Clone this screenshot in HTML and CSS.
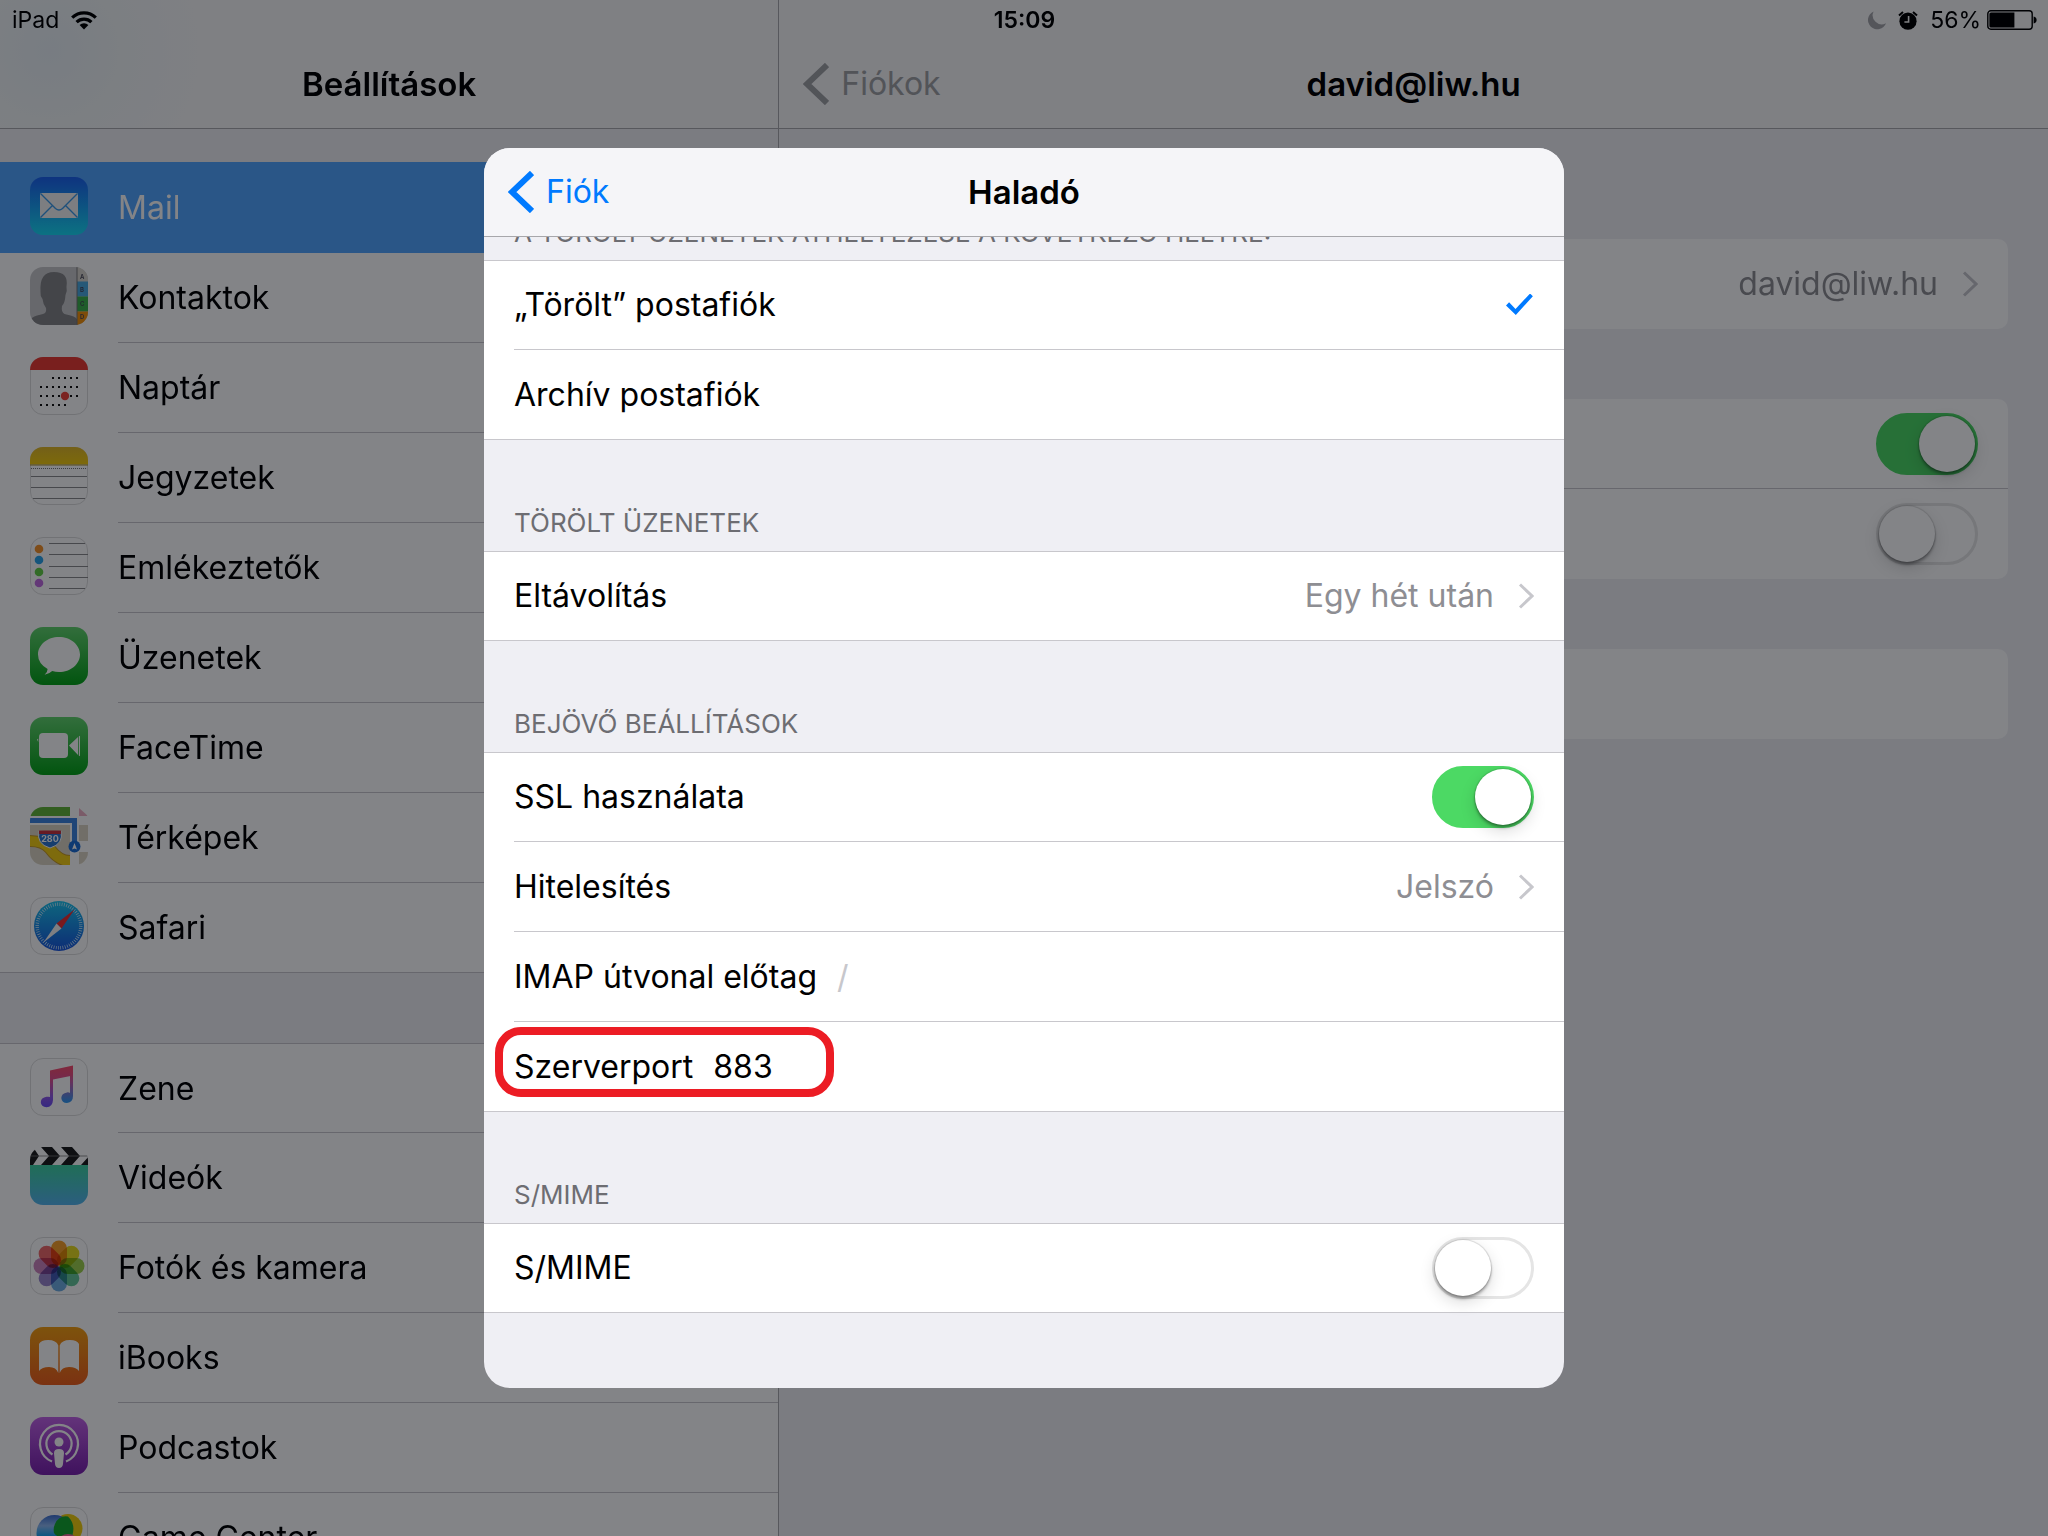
FILE: index.html
```html
<!DOCTYPE html>
<html lang="hu">
<head>
<meta charset="utf-8">
<meta name="viewport" content="width=device-width, initial-scale=1">
<title>Beállítások</title>
<link rel="stylesheet" href="styles.css">
</head>
<body>
<div class="screen">
  <header class="status">
    <div class="status-side">
      <span>iPad</span>
      <svg class="wifi" viewBox="0 0 26 19" aria-hidden="true"><g fill="none" stroke="#000" stroke-width="3.2"><path d="M1.2 6.6a17 17 0 0 1 23.6 0"/><path d="M5.6 11.2a10.6 10.6 0 0 1 14.8 0"/></g><path d="M13 18.6l-4.4-4.5a6.4 6.4 0 0 1 8.8 0z"/></svg>
    </div>
    <strong class="clock">15:09</strong>
    <div class="status-side status-right">
      <svg class="moon" viewBox="0 0 18 19" aria-hidden="true"><path fill="#a3a4a8" d="M5.6.4A9.3 9.3 0 1 0 18 12.2 9 9 0 0 1 5.6.4z"/></svg>
      <svg class="alarm" viewBox="0 0 20 19" aria-hidden="true"><circle cx="10" cy="10.2" r="8.6"/><path d="M1 4.6L5 1M19 4.6L15 1" stroke="#000" stroke-width="2"/><path d="M10.6 5v6H6.4" fill="none" stroke="#f7f7f8" stroke-width="1.6"/></svg>
      <span>56%</span>
      <svg class="battery" viewBox="0 0 50 20" aria-hidden="true"><rect x=".8" y=".8" width="44.4" height="18.4" rx="3" fill="none" stroke="#000" stroke-width="1.4"/><path d="M4 2.4h23.4v15.2H4a1.6 1.6 0 0 1-1.6-1.6V4A1.6 1.6 0 0 1 4 2.4z"/><path d="M46.600 6.600q3 .6 3 3.400t-3 3.400z"/></svg>
    </div>
  </header>

  <nav class="sidebar">
    <div class="bar bar-tint"><h1 class="bar-title">Beállítások</h1></div>
    <ul class="menu">
      <li class="active"><a href="#mail">
        <svg class="app" viewBox="0 0 58 58"><defs><linearGradient id="gm" x2="0" y2="1"><stop offset="0" stop-color="#1d62f0"/><stop offset="1" stop-color="#19dcf6"/></linearGradient></defs><rect width="58" height="58" rx="13" fill="url(#gm)"/><rect x="10" y="16" width="38" height="25" rx="1" fill="#f4f4f4"/><path d="M10.5 16.500L25.500 31.500q3.500 3.200 7 0L47.500 16.500M10.500 40.500L22.500 28.500M47.500 40.500L35.500 28.500" fill="none" stroke="#3b9be8" stroke-width="1.400"/></svg>
        <span>Mail</span></a></li>
      <li><a href="#kontaktok">
        <svg class="app" viewBox="0 0 58 58"><defs><clipPath id="r"><rect width="58" height="58" rx="13"/></clipPath></defs><g clip-path="url(#r)"><rect width="58" height="58" fill="#c9c9cb"/><path d="M0 58v-4q1-4 7-5.500l6-1.500q4-1 3-6-3-4-3.500-9-2.500-3-2-7Q9 5 24 5t12.500 15q1 4-1 8-.5 8-3.500 11-1 6 2.500 8l6 1.500q7 1.500 7 5.500v4z" fill="#858587"/><rect x="47" width="11" height="15" fill="#d8d5cc"/><rect x="47" y="14.500" width="11" height="15" fill="#4aa9e0"/><rect x="47" y="29.500" width="11" height="15" fill="#3db14b"/><rect x="47" y="44.500" width="11" height="14" fill="#f6930b"/><path d="M47 0v58" stroke="#777"/></g><g font-family="Inter, sans-serif" font-size="6" font-weight="600" fill="#445"><text x="50" y="12">A</text><text x="50" y="25">B</text><text x="50" y="39">C</text><text x="50" y="52">D</text></g></svg>
        <span>Kontaktok</span></a></li>
      <li><a href="#naptar">
        <svg class="app" viewBox="0 0 58 58"><rect x=".5" y=".5" width="57" height="57" rx="12.500" fill="#fff" stroke="#ddd"/><path d="M0 13a13 13 0 0 1 13-13h32a13 13 0 0 1 13 13z" fill="#ec3b33"/><g stroke="#111" stroke-width="2" stroke-dasharray="2 4"><path d="M22 21h27M10 30h39M10 39h39M10 48h27"/></g><circle cx="35" cy="39" r="4.200" fill="#f0433a"/></svg>
        <span>Naptár</span></a></li>
      <li><a href="#jegyzetek">
        <svg class="app" viewBox="0 0 58 58"><defs><linearGradient id="gn" x2="0" y2="1"><stop offset="0" stop-color="#e0b92a"/><stop offset="1" stop-color="#f4cb0c"/></linearGradient></defs><rect x=".5" y=".5" width="57" height="57" rx="12.500" fill="#fff" stroke="#ddd"/><path d="M0 17.500V13A13 13 0 0 1 13 0h32a13 13 0 0 1 13 13v4.500z" fill="url(#gn)"/><path d="M0 18h58" stroke="#a58f30"/><path d="M1 21.500h56" stroke="#777" stroke-dasharray="1 1"/><path d="M1 29.500h56M1 40.500h56M3 51.500h52" stroke="#8a8a8c"/></svg>
        <span>Jegyzetek</span></a></li>
      <li><a href="#emlekeztetok">
        <svg class="app" viewBox="0 0 58 58"><rect x=".5" y=".5" width="57" height="57" rx="12.500" fill="#fff" stroke="#ddd"/><circle cx="9" cy="12" r="4.300" fill="#f5932a"/><circle cx="9" cy="23" r="4.300" fill="#2aa3ea"/><circle cx="9" cy="35" r="4.300" fill="#63cf47"/><circle cx="9" cy="46" r="4.300" fill="#c06be0"/><path d="M19 6.500h36M19 17.500h39M19 29.500h39M19 40.500h39M19 51.500h36" stroke="#8a8a8c"/></svg>
        <span>Emlékeztetők</span></a></li>
      <li><a href="#uzenetek">
        <svg class="app" viewBox="0 0 58 58"><defs><linearGradient id="gg" x2="0" y2="1"><stop offset="0" stop-color="#63d46d"/><stop offset="1" stop-color="#05a317"/></linearGradient></defs><rect width="58" height="58" rx="13" fill="url(#gg)"/><path d="M29 10c11.600 0 21 7.800 21 17.500S40.600 45 29 45q-3.500 0-6.800-.9-3 3-7.600 3.700 3-2.600 3-5.800Q8 36.500 8 27.500C8 17.800 17.400 10 29 10z" fill="#fff"/></svg>
        <span>Üzenetek</span></a></li>
      <li><a href="#facetime">
        <svg class="app" viewBox="0 0 58 58"><rect width="58" height="58" rx="13" fill="url(#gg)"/><rect x="9" y="16" width="29" height="25" rx="4" fill="#fff"/><path d="M39 28.500l9-8.500v18zM48.800 19.500l1.200-.8v20.600l-1.200-.8zM7 22.500l1.200-1v3.600z" fill="#fff"/></svg>
        <span>FaceTime</span></a></li>
      <li><a href="#terkepek">
        <svg class="app" viewBox="0 0 58 58"><g clip-path="url(#r)"><rect width="58" height="58" fill="#fff"/><path d="M0 0h40v9H0z" fill="#63b53a"/><path d="M49 1l9 8h-9z" fill="#eeb0c2"/><path d="M0 18h40v40H0z" fill="#dcd5c3"/><path d="M49 18h9v16h-9zM49 45h9v13h-9z" fill="#dcd5c3"/><path d="M0 34q14 0 20 8 9 12 20 12" fill="none" stroke="#c79a28" stroke-width="12"/><path d="M0 34q14 0 20 8 9 12 20 12" fill="none" stroke="#f5cf12" stroke-width="10"/><path d="M40 18h9v40h-9z" fill="#fff"/><path d="M50 58l8-6v6z" fill="#f5cf12"/><path d="M0 13.500h44.500V38" fill="none" stroke="#3d85e0" stroke-width="5"/><circle cx="44.500" cy="39.500" r="6" fill="#1e6fd6"/><path d="M44.500 36l2.500 6.500-2.500-1-2.500 1z" fill="#fff"/><path d="M9 24q11 2 22 0 3 13-11 17Q6 37 9 24z" fill="#2b76cf" stroke="#fff" stroke-width="1"/><path d="M9 23.500h22v3.500H9z" fill="#c8343d"/></g><text x="20" y="35" text-anchor="middle" font-family="Inter, sans-serif" font-size="9" font-weight="700" fill="#fff">280</text></svg>
        <span>Térképek</span></a></li>
      <li><a href="#safari">
        <svg class="app" viewBox="0 0 58 58"><defs><linearGradient id="gs" x2="0" y2="1"><stop offset="0" stop-color="#1cc5ee"/><stop offset="1" stop-color="#1a56dd"/></linearGradient></defs><rect x=".5" y=".5" width="57" height="57" rx="12.500" fill="#fff" stroke="#ddd"/><circle cx="29" cy="29" r="25" fill="url(#gs)"/><circle cx="29" cy="29" r="21.800" fill="none" stroke="#d9f2ff" stroke-width="3.400" stroke-dasharray=".7 1.580"/><path d="M44.500 12.500L31.500 31.500 26.500 26.500z" fill="#ee2f31"/><path d="M13.500 45.500L26.500 26.500 31.500 31.500z" fill="#f5f5f5"/></svg>
        <span>Safari</span></a></li>
    </ul>
    <ul class="menu">
      <li><a href="#zene">
        <svg class="app" viewBox="0 0 58 58"><defs><linearGradient id="gz" x2="0" y2="1"><stop offset="0" stop-color="#fb4d6c"/><stop offset=".35" stop-color="#e0508f"/><stop offset=".75" stop-color="#8f5ae8"/><stop offset="1" stop-color="#6a4df5"/></linearGradient><linearGradient id="gy" x2="0" y2="1"><stop offset="0" stop-color="#fb4d6c"/><stop offset=".4" stop-color="#c060b0"/><stop offset="1" stop-color="#2b9bf5"/></linearGradient></defs><rect x=".5" y=".5" width="57" height="57" rx="12.500" fill="#fff" stroke="#ddd"/><path d="M40 17v18q-1-.8-3-.6-5.500.8-5.700 5.600.5 5 5.700 5 6-.8 6-7V12z" fill="url(#gy)"/><path d="M20 12.500L43 7.500V17.500L23 21.500V42q-.4 7-6.500 7.200-5.500-.4-5.700-5 .2-4.600 5.700-5.400 2.500-.4 3.500.2z" fill="url(#gz)"/></svg>
        <span>Zene</span></a></li>
      <li><a href="#videok">
        <svg class="app" viewBox="0 0 58 58"><defs><linearGradient id="gv" x2="0" y2="1"><stop offset="0" stop-color="#3fd3a2"/><stop offset="1" stop-color="#55b5ee"/></linearGradient></defs><path d="M0 18h58v27a13 13 0 0 1-13 13H13A13 13 0 0 1 0 45z" fill="url(#gv)"/><g clip-path="url(#r)"><path d="M0 0h58v18H0z" fill="#fff"/><path d="M-9 0H3l6 9-6 9H-9zM11 0h11l8 9-8 9H11l8-9zM31 0h11l8 9-8 9H31l8-9zM51 18l8-9v9zM53 0h6v6z" fill="#1c1c1c"/><path d="M0 9h58" stroke="#777" stroke-width=".8"/></g></svg>
        <span>Videók</span></a></li>
      <li><a href="#fotok">
        <svg class="app" viewBox="0 0 58 58"><rect x=".5" y=".5" width="57" height="57" rx="12.500" fill="#fff" stroke="#ddd"/><g class="petals"><rect x="21" y="3.500" width="16" height="25" rx="8" fill="#f7a02a"/><rect x="21" y="3.500" width="16" height="25" rx="8" fill="#e8dc20" transform="rotate(45 29 29)"/><rect x="21" y="3.500" width="16" height="25" rx="8" fill="#9ed04c" transform="rotate(90 29 29)"/><rect x="21" y="3.500" width="16" height="25" rx="8" fill="#66c79a" transform="rotate(135 29 29)"/><rect x="21" y="3.500" width="16" height="25" rx="8" fill="#6faee2" transform="rotate(180 29 29)"/><rect x="21" y="3.500" width="16" height="25" rx="8" fill="#9a86cc" transform="rotate(225 29 29)"/><rect x="21" y="3.500" width="16" height="25" rx="8" fill="#cc85bd" transform="rotate(270 29 29)"/><rect x="21" y="3.500" width="16" height="25" rx="8" fill="#f0696a" transform="rotate(315 29 29)"/></g></svg>
        <span>Fotók és kamera</span></a></li>
      <li><a href="#ibooks">
        <svg class="app" viewBox="0 0 58 58"><defs><linearGradient id="gb" x2="0" y2="1"><stop offset="0" stop-color="#f4a011"/><stop offset="1" stop-color="#ee5f1c"/></linearGradient></defs><rect width="58" height="58" rx="13" fill="url(#gb)"/><path d="M28.300 46q-2-6-9.300-6-7 0-10 4V17q2-4 9-4 8.500 0 10.300 5.500zM29.700 46q2-6 9.300-6 7 0 10 4V17q-2-4-9-4-8.500 0-10.300 5.500z" fill="#fff"/></svg>
        <span>iBooks</span></a></li>
      <li><a href="#podcastok">
        <svg class="app" viewBox="0 0 58 58"><defs><linearGradient id="gp" x2="0" y2="1"><stop offset="0" stop-color="#c263e6"/><stop offset="1" stop-color="#7b21ae"/></linearGradient></defs><rect width="58" height="58" rx="13" fill="url(#gp)"/><g fill="none" stroke="#fff" stroke-width="2.200"><path d="M22 44.500a19 19 0 1 1 14 0"/><path d="M22.500 37.500a12.600 12.600 0 1 1 13 0"/></g><circle cx="29" cy="25" r="4.500" fill="#fff"/><path d="M29 32q5 0 5 4l-1 11q-.5 4-4 4t-4-4l-1-11q0-4 5-4z" fill="#fff"/></svg>
        <span>Podcastok</span></a></li>
      <li><a href="#gamecenter">
        <svg class="app" viewBox="0 0 58 58"><defs><linearGradient id="gc" x2="0" y2="1"><stop offset="0" stop-color="#3d6fd0"/><stop offset=".3" stop-color="#8fb8f0"/><stop offset=".6" stop-color="#12a5f5"/></linearGradient></defs><rect x=".5" y=".5" width="57" height="57" rx="12.500" fill="#fff" stroke="#ddd"/><circle cx="38" cy="21.500" r="14.500" fill="#f2cf0c"/><circle cx="24.500" cy="26" r="18" fill="url(#gc)"/><path d="M25 17Q29 8 38 9.500A18 18 0 0 1 42.300 28Q30 34 24 26q-1-5 1-9z" fill="#15a830"/><circle cx="38" cy="39" r="12" fill="#f06a9a"/></svg>
        <span>Game Center</span></a></li>
    </ul>
  </nav>

  <main class="detail">
    <div class="bar">
      <button class="back back-muted" type="button"><svg class="back-icon" viewBox="0 0 26 42" aria-hidden="true"><path d="M24 2L4 21l20 19" fill="none" stroke="currentColor" stroke-width="6"/></svg>Fiókok</button>
      <h2 class="bar-title">david@liw.hu</h2>
    </div>
    <div class="cards">
      <div class="card">
        <a class="card-row" href="#fiok"><span class="value">david@liw.hu</span><svg class="chevron" viewBox="0 0 16 26" aria-hidden="true"><path d="M2 1.500L14 13 2 24.500" fill="none" stroke="currentColor" stroke-width="3"/></svg></a>
      </div>
      <div class="card">
        <div class="card-row"><input class="switch" type="checkbox" role="switch" aria-label="Mail" checked></div>
        <div class="card-row"><input class="switch" type="checkbox" role="switch" aria-label="Jegyzetek"></div>
      </div>
      <div class="card"><button class="card-row" type="button" aria-label="Fiók törlése"></button></div>
    </div>
  </main>
</div>

<div class="dim">
  <section class="sheet" role="dialog" aria-labelledby="sheet-title">
    <div class="sheet-bar">
      <button class="back" type="button"><svg class="back-icon" viewBox="0 0 26 42" aria-hidden="true"><path d="M24 2L4 21l20 19" fill="none" stroke="currentColor" stroke-width="6"/></svg>Fiók</button>
      <h2 class="bar-title" id="sheet-title">Haladó</h2>
    </div>

    <h3 class="caption caption-cut">A törölt üzenetek áthelyezése a következő helyre:</h3>
    <div class="group">
      <label class="row"><span>„Törölt” postafiók</span><input class="tick" type="radio" name="trash" checked></label>
      <label class="row"><span>Archív postafiók</span><input class="tick" type="radio" name="trash"></label>
    </div>

    <h3 class="caption">Törölt üzenetek</h3>
    <div class="group">
      <a class="row" href="#eltavolitas"><span>Eltávolítás</span><span class="value">Egy hét után</span><svg class="chevron" viewBox="0 0 16 26" aria-hidden="true"><path d="M2 1.500L14 13 2 24.500" fill="none" stroke="currentColor" stroke-width="3"/></svg></a>
    </div>

    <h3 class="caption">Bejövő beállítások</h3>
    <div class="group">
      <label class="row"><span>SSL használata</span><input class="switch" type="checkbox" role="switch" checked></label>
      <a class="row" href="#hitelesites"><span>Hitelesítés</span><span class="value">Jelszó</span><svg class="chevron" viewBox="0 0 16 26" aria-hidden="true"><path d="M2 1.500L14 13 2 24.500" fill="none" stroke="currentColor" stroke-width="3"/></svg></a>
      <div class="row"><label for="prefix">IMAP útvonal előtag</label><input class="field" id="prefix" type="text" placeholder="/"></div>
      <div class="row marked"><label for="port">Szerverport</label><input class="field" id="port" type="text" value="883"></div>
    </div>

    <h3 class="caption">S/MIME</h3>
    <div class="group">
      <label class="row"><span>S/MIME</span><input class="switch" type="checkbox" role="switch"></label>
    </div>
  </section>
</div>
</body>
</html>
```
FILE: styles.css
```css
*, *::before, *::after { box-sizing: border-box; }

body {
  margin: 0;
  overflow: hidden;
  font-family: Inter, "Liberation Sans", sans-serif;
  font-size: 32px;
  line-height: 40px;
  color: #000;
}

button, input {
  margin: 0;
  padding: 0;
  border: 0;
  background: none;
  font: inherit;
  color: inherit;
}

a { color: inherit; text-decoration: none; }
h1, h2, h3, ul { margin: 0; padding: 0; font-size: inherit; }
ul { list-style: none; }
svg { display: block; flex: none; }

.screen {
  position: relative;
  display: grid;
  grid-template-columns: calc(38% + 1px) 1fr;
  height: 100vh;
  overflow: hidden;
  background: #efeff4;
}

/* Status bar */
.status {
  position: absolute;
  z-index: 1;
  inset: 0 0 auto;
  display: grid;
  grid-template-columns: 1fr auto 1fr;
  align-items: center;
  height: 40px;
  padding: 0 11px 0 12px;
  font-size: 23px;
}
.status-side { display: flex; align-items: center; gap: 12px; }
.status-right { justify-content: flex-end; }
.clock { font-weight: 600; }
.wifi { width: 26px; height: 19px; }
.moon { width: 18px; height: 19px; }
.alarm { width: 20px; height: 19px; }
.battery { width: 50px; height: 20px; margin-left: -6px; }

/* Navigation bars */
.bar {
  position: relative;
  display: flex;
  align-items: center;
  justify-content: center;
  height: 129px;
  padding-top: 40px;
  background: #f7f7f8;
  border-bottom: 1px solid #aaaaae;
}
.bar-tint { background: radial-gradient(circle at 50px 50px, #e9f0f6, #f1f5f6 70px, #f7f7f8 150px); }
.bar-title { font-size: 33px; font-weight: 600; }
.back {
  position: absolute;
  left: 24px;
  display: flex;
  align-items: center;
  gap: 12px;
  color: #007aff;
}
.back-muted { color: #a0a1a4; }
.back-icon { width: 26px; height: 42px; }

/* Sidebar */
.sidebar { border-right: 1px solid #aaaaae; }
.menu {
  background: #fff;
  border-bottom: 1px solid #c8c7cc;
}
.sidebar .menu:nth-of-type(1) { margin-top: 33px; }
.sidebar .menu:nth-of-type(2) { margin-top: 70px; border-top: 1px solid #c8c7cc; }
.menu a {
  position: relative;
  display: flex;
  align-items: center;
  gap: 30px;
  height: 90px;
  padding-left: 30px;
}
.menu li:not(:last-child) a::after {
  content: "";
  position: absolute;
  inset: auto 0 0 118px;
  height: 1px;
  background: #c8c7cc;
}
.menu li:last-child a { height: 89px; }
.menu:nth-of-type(2) li:first-child a { height: 89px; }
.menu .active a { height: 91px; background: #53a5ff; color: #fff; }
.menu .active a::after { display: none; }
.app { width: 58px; height: 58px; margin-bottom: 4px; }
.petals rect { mix-blend-mode: multiply; }

/* Account detail */
.cards {
  display: flex;
  flex-direction: column;
  gap: 70px;
  padding: 110px 40px 0;
}
.card { border-radius: 10px; background: #fff; overflow: hidden; }
.card-row {
  display: flex;
  align-items: center;
  justify-content: flex-end;
  width: 100%;
  height: 90px;
  padding: 0 30px;
}
.card-row:not(:last-child) { border-bottom: 1px solid #c8c7cc; }
.value { color: #8e8e93; }
.chevron { width: 16px; height: 26px; margin-left: 24px; color: #c7c7cc; }

/* Sheet over the dimmed screen */
.dim {
  position: fixed;
  z-index: 2;
  inset: 0;
  display: grid;
  place-items: center;
  background: rgba(0, 2, 8, 0.485);
}
.sheet {
  width: 1080px;
  max-width: 100%;
  padding-bottom: 75px;
  overflow: hidden;
  border-radius: 26px;
  background: #efeff4;
}
.sheet-bar {
  position: relative;
  display: flex;
  align-items: center;
  justify-content: center;
  height: 89px;
  background: #f5f5f8;
  border-bottom: 1px solid #a7a7ab;
}
.caption {
  display: flex;
  align-items: flex-end;
  height: 111px;
  padding: 0 30px 13px;
  overflow: hidden;
  font-size: 26px;
  line-height: 30px;
  font-weight: 400;
  text-transform: uppercase;
  white-space: nowrap;
  color: #6d6d72;
}
.caption-cut { height: 23px; padding-bottom: 12px; }

.row {
  position: relative;
  display: flex;
  align-items: center;
  height: 90px;
  padding: 0 30px;
  background: #fff;
}
.row::after {
  content: "";
  position: absolute;
  inset: auto 0 0 30px;
  height: 1px;
  background: #c8c7cc;
}
.row:first-child { border-top: 1px solid #c8c7cc; padding-bottom: 2px; }
.row:last-child::after { left: 0; }
.row .value, .row .switch, .row .tick { margin-left: auto; }
.field {
  flex: 1;
  min-width: 0;
  margin-left: 20px;
  outline: 0;
}
.field::placeholder { color: #c7c7cc; opacity: 1; }

.marked::before {
  content: "";
  position: absolute;
  left: 11px;
  top: 5px;
  width: 339px;
  height: 70px;
  border: 8px solid #ec1c24;
  border-radius: 26px;
  pointer-events: none;
}

/* Controls */
.tick { appearance: none; width: 28px; height: 22px; }
.tick:checked {
  background: #007aff;
  clip-path: polygon(0 54%, 11% 40%, 34% 70%, 86% 0, 96% 12%, 35% 98%);
}
.switch {
  appearance: none;
  flex: none;
  width: 102px;
  height: 62px;
  border: 3px solid #e5e5e5;
  border-radius: 31px;
  background: #fff;
}
.switch::before {
  content: "";
  display: block;
  width: 56px;
  height: 56px;
  border-radius: 50%;
  background: #fff;
  box-shadow: 0 0 1px 1px rgba(0, 0, 0, 0.12), 0 3px 3px rgba(0, 0, 0, 0.3), 0 6px 16px rgba(0, 0, 0, 0.15);
}
.switch:checked { border-color: #4cd964; background: #4cd964; }
.switch:checked::before { margin-left: auto; }
```
